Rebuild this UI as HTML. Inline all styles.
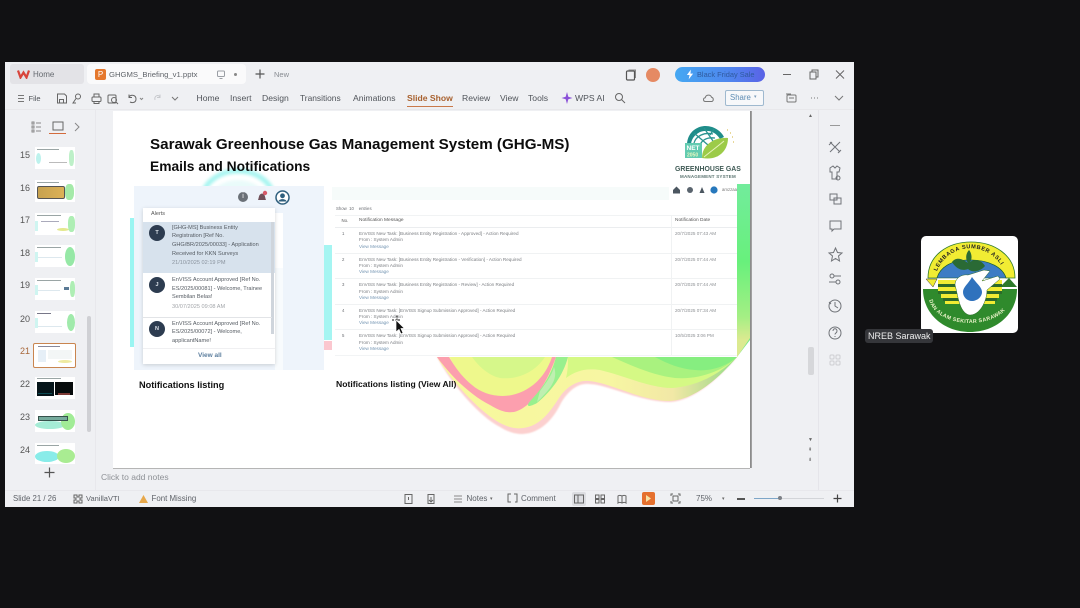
<!DOCTYPE html>
<html lang="en">
<head>
<meta charset="utf-8">
<title>GHGMS Briefing</title>
<style>
html,body{margin:0;padding:0;width:1080px;height:608px;overflow:hidden;background:#111113;font-family:"Liberation Sans",sans-serif}
#all{position:absolute;left:0;top:0;width:1080px;height:608px;background:#111113;overflow:hidden;filter:blur(.35px)}
.a{position:absolute}
.t{position:absolute;white-space:nowrap;line-height:1}
#win{position:absolute;left:5px;top:62px;width:849px;height:445px;background:#eff0f3}
.menu{font-size:8.6px;color:#50545a;top:94px}
.num{font-size:9px;color:#555;left:20px}
.thumb{position:absolute;left:35px;width:40px;height:22px;background:#fff;overflow:hidden}
.thumb i{position:absolute;display:block}
.s5{font-size:4.3px;color:#6a6d72}
.row{font-size:4.6px;color:#7b7e82;left:359px}
.lnk{font-size:4.6px;color:#7596b3;left:359px}
.dt{font-size:4.6px;color:#8c8f93;left:675px}
.al{font-size:5.6px;color:#555b62;left:172px}
.st{font-size:8px;color:#5e6268;top:495px}
</style>
</head>
<body>
<div id="all">
<div id="win"></div>

<!-- Tabs -->
<div class="a" style="left:10px;top:64px;width:74px;height:20px;background:#e3e3e7;border-radius:3px"></div>
<div class="a" style="left:87px;top:64px;width:159px;height:20px;background:#fafafb;border-radius:4px"></div>
<svg class="a" style="left:17px;top:69px" width="13" height="10" viewBox="0 0 13 10"><path d="M1 1.500 L3.500 8.500 L6.500 3.500 L9.500 8.500 L12 1.500" fill="none" stroke="#d8453c" stroke-width="2.200"/></svg>
<div class="t" style="left:33px;top:71px;font-size:8px;color:#666a70">Home</div>
<div class="a" style="left:95px;top:69px;width:11px;height:11px;background:#e5782e;border-radius:2px;color:#fff;font-size:8px;line-height:11px;text-align:center">P</div>
<div class="t" style="left:109px;top:71px;font-size:7.700px;color:#60646a">GHGMS_Briefing_v1.pptx</div>
<svg class="a" style="left:216px;top:70px" width="11" height="10" viewBox="0 0 11 10"><rect x="1.500" y="1" width="7" height="5.500" rx="1" fill="none" stroke="#9a9ea4"/><path d="M3.500 8.500h3" stroke="#9a9ea4"/></svg>
<div class="a" style="left:234px;top:73px;width:3px;height:3px;background:#888;border-radius:50%"></div>
<svg class="a" style="left:254px;top:68px" width="12" height="12" viewBox="0 0 12 12"><path d="M6 1.500v9M1.500 6h9" stroke="#555" stroke-width="1.200"/></svg>
<div class="t" style="left:274px;top:71px;font-size:7.500px;color:#888c92">New</div>

<!-- Title-bar right -->
<svg class="a" style="left:625px;top:69px" width="12" height="12" viewBox="0 0 12 12"><rect x="1.500" y="2" width="8" height="9" rx="1" fill="none" stroke="#555" stroke-width="1.200"/><path d="M3.500 1h7v8" fill="none" stroke="#888"/></svg>
<div class="a" style="left:646px;top:68px;width:14px;height:14px;border-radius:50%;background:#e58a63"></div>
<div class="a" style="left:675px;top:67px;width:90px;height:15px;border-radius:8px;background:linear-gradient(90deg,#45a8f2,#4f86ee 60%,#5a62e6)"></div>
<svg class="a" style="left:686px;top:69px" width="8" height="11" viewBox="0 0 9 12"><path d="M5.500 .5 L1 6.500 H4 L3 11.500 L8 5 H5 Z" fill="#fff"/></svg>
<div class="t" style="left:697px;top:71px;font-size:7.400px;color:#2f5a9e">Black Friday Sale</div>
<svg class="a" style="left:781px;top:68px" width="66" height="13" viewBox="0 0 66 13" fill="none" stroke="#666" stroke-width="1"><path d="M2 6.500h8"/><rect x="29" y="4" width="6" height="7"/><path d="M31 4V2h6v7h-2"/><path d="M55 2.500l8 8M63 2.500l-8 8"/></svg>

<!-- Menu bar -->
<svg class="a" style="left:17px;top:94px" width="8" height="9" viewBox="0 0 8 9"><path d="M1 1.500h6M1 4.500h6M1 7.500h6" stroke="#777"/></svg>
<div class="t menu" style="left:28.500px;font-size:7.500px;top:95px">File</div>
<svg class="a" style="left:56px;top:92px" width="130" height="13" viewBox="0 0 130 13" fill="none" stroke="#666" stroke-width="1"><path d="M1.500 2h7l2 2v7h-9z"/><path d="M3.500 11V7.500h4V11"/><circle cx="22" cy="4.500" r="2.500"/><path d="M20 6.500l-3 4.500h3"/><rect x="36" y="5" width="9" height="4.500" rx="1"/><path d="M38 5V2h5v3M38 9.500v2h5v-2"/><rect x="52" y="3" width="8" height="8" rx="1"/><circle cx="58" cy="8" r="2.500"/><path d="M60 10l2 2"/><path d="M73 5c2-3 7-2 7 2s-4 4-6 3M73 2.500V5.500h3"/><path d="M84 6l1.500 1.500L87 6" stroke="#888"/><path d="M104 5c-2-3-6-1-5 3M104 2.500V5.500h-3" stroke="#c7c9cd"/><path d="M116 5l3 3 3-3" stroke="#777"/></svg>
<div class="t menu" style="left:196.500px">Home</div>
<div class="t menu" style="left:230px">Insert</div>
<div class="t menu" style="left:262px">Design</div>
<div class="t menu" style="left:300px;font-size:8.400px">Transitions</div>
<div class="t menu" style="left:353px">Animations</div>
<div class="t menu" style="left:407px;color:#a8612f;font-weight:bold">Slide Show</div>
<div class="a" style="left:407px;top:106px;width:46px;height:1px;background:#c9794a"></div>
<div class="t menu" style="left:462px">Review</div>
<div class="t menu" style="left:500px">View</div>
<div class="t menu" style="left:528px">Tools</div>
<svg class="a" style="left:561px;top:91px" width="12" height="14" viewBox="0 0 12 14"><path d="M6 1 L7.300 5.700 L11.500 7 L7.300 8.300 L6 13 L4.700 8.300 L.5 7 L4.700 5.700Z" fill="#8a50d8"/></svg>
<div class="t menu" style="left:575px">WPS AI</div>
<svg class="a" style="left:614px;top:92px" width="12" height="12" viewBox="0 0 12 12" fill="none" stroke="#666"><circle cx="5" cy="5" r="3.500"/><path d="M7.500 7.500l3.500 3.500"/></svg>
<svg class="a" style="left:702px;top:92px" width="13" height="12" viewBox="0 0 13 12" fill="none" stroke="#777"><path d="M3.500 9.500C1 9.500.8 6 3.300 5.700 3.800 2.500 8.500 2.200 9.500 5.200 11.500 5.500 12 8.500 10 9.500z"/></svg>
<div class="a" style="left:725px;top:90px;width:37px;height:14px;border:1px solid #9fb9cf;border-radius:2px;background:#f7f8fa"></div>
<div class="t" style="left:730px;top:94px;font-size:7.800px;color:#5d8cb4">Share</div>
<div class="t" style="left:754px;top:95px;font-size:5px;color:#7a9cba">▾</div>
<svg class="a" style="left:785px;top:92px" width="60" height="12" viewBox="0 0 60 12" fill="none" stroke="#777"><rect x="2" y="3" width="9" height="7" rx="1"/><path d="M1 2h5M4 6h5"/><path d="M26 6h1M29 6h1M32 6h1"/><path d="M50 4l4 4 4-4"/></svg>

<!-- Divider lines -->
<div class="a" style="left:5px;top:109px;width:849px;height:1px;background:#e8e8eb"></div>
<div class="a" style="left:95px;top:110px;width:1px;height:380px;background:#e8e8ec"></div>
<div class="a" style="left:818px;top:110px;width:1px;height:380px;background:#e5e5ea"></div>
<div class="a" style="left:5px;top:490px;width:849px;height:1px;background:#e8e8ec"></div>

<!-- Left panel -->
<svg class="a" style="left:31px;top:120px" width="60" height="14" viewBox="0 0 60 14" fill="none" stroke="#888"><path d="M1 2h2v2H1zM1 6h2v2H1zM1 10h2v2H1z"/><path d="M5 3h5M5 7h5M5 11h5"/><rect x="22" y="2" width="10" height="8" stroke="#666"/><path d="M44 3l4 4-4 4"/></svg>
<div class="a" style="left:49px;top:133px;width:17px;height:1px;background:#d36b3c"></div>

<div class="t num" style="top:151px">15</div><div class="t num" style="top:184px">16</div><div class="t num" style="top:216px">17</div><div class="t num" style="top:249px">18</div><div class="t num" style="top:281px">19</div><div class="t num" style="top:315px">20</div><div class="t num" style="top:347px;color:#a8673a">21</div><div class="t num" style="top:380px">22</div><div class="t num" style="top:413px">23</div><div class="t num" style="top:446px">24</div>

<div class="thumb" style="top:147px"><i style="left:2px;top:2px;width:22px;height:1px;background:#9aa5a5"></i><i style="left:1px;top:6px;width:5px;height:11px;background:#bdf2ed;border-radius:50%"></i><i style="left:34px;top:3px;width:5px;height:16px;background:#bdf0c8;border-radius:40%"></i><i style="left:14px;top:15px;width:18px;height:1px;background:#bbb"></i></div>
<div class="thumb" style="top:180px"><i style="left:2px;top:2px;width:22px;height:1px;background:#9aa5a5"></i><i style="left:2px;top:6px;width:28px;height:13px;background:linear-gradient(90deg,#c7a250,#dcb156);border:1px solid #555;border-radius:2px;box-sizing:border-box"></i><i style="left:30px;top:4px;width:9px;height:16px;background:#a5eaa9;border-radius:40%"></i></div>
<div class="thumb" style="top:213px"><i style="left:2px;top:2px;width:24px;height:1px;background:#9aa5a5"></i><i style="left:6px;top:8px;width:18px;height:1px;background:#aab"></i><i style="left:22px;top:15px;width:12px;height:3px;background:#e4e88e;border-radius:50%"></i><i style="left:33px;top:3px;width:7px;height:16px;background:#aeeeb4;border-radius:40%"></i><i style="left:0;top:8px;width:3px;height:10px;background:#cff5f1"></i></div>
<div class="thumb" style="top:245px"><i style="left:2px;top:2px;width:24px;height:1px;background:#9aa5a5"></i><i style="left:30px;top:2px;width:10px;height:19px;background:#96e8a6;border-radius:50%"></i><i style="left:0;top:7px;width:3px;height:10px;background:#cff5f1"></i><i style="left:3px;top:12px;width:24px;height:1px;background:#dde8ee"></i></div>
<div class="thumb" style="top:278px"><i style="left:2px;top:2px;width:24px;height:1px;background:#9aa5a5"></i><i style="left:29px;top:9px;width:5px;height:3px;background:#5b7a95"></i><i style="left:35px;top:3px;width:5px;height:16px;background:#aeeeb4;border-radius:40%"></i><i style="left:0;top:7px;width:3px;height:10px;background:#cff5f1"></i><i style="left:3px;top:12px;width:22px;height:1px;background:#dde8ee"></i></div>
<div class="thumb" style="top:311px"><i style="left:2px;top:2px;width:14px;height:1px;background:#778"></i><i style="left:32px;top:3px;width:8px;height:17px;background:#a0eaab;border-radius:50%"></i><i style="left:0;top:7px;width:3px;height:10px;background:#cff5f1"></i><i style="left:3px;top:15px;width:24px;height:1px;background:#dde8ee"></i></div>
<div class="a" style="left:33px;top:343px;width:41px;height:23px;border:1px solid #c9854f;border-radius:2px;background:#fff;overflow:hidden"><i style="position:absolute;left:4px;top:2px;width:22px;height:1px;background:#889"></i><i style="position:absolute;left:4px;top:6px;width:8px;height:12px;background:#e6eff7"></i><i style="position:absolute;left:14px;top:6px;width:24px;height:9px;background:#f3f6f6"></i><i style="position:absolute;left:24px;top:16px;width:14px;height:3px;background:#eeeaa0;border-radius:50%"></i></div>
<div class="thumb" style="top:377px"><i style="left:2px;top:1px;width:24px;height:1px;background:#9aa5a5"></i><i style="left:2px;top:5px;width:17px;height:14px;background:#06151a"></i><i style="left:20px;top:5px;width:18px;height:13px;background:#070b0c"></i><i style="left:23px;top:16px;width:12px;height:2px;background:#7d3a35"></i><i style="left:3px;top:16px;width:14px;height:1px;background:#0c4a52"></i></div>
<div class="thumb" style="top:410px"><i style="left:0;top:11px;width:30px;height:8px;background:#a5ecd6;border-radius:50%"></i><i style="left:26px;top:3px;width:14px;height:17px;background:#a1ec96;border-radius:50%"></i><i style="left:3px;top:6px;width:30px;height:5px;background:#76ab9c;border:1px solid #37524c;box-sizing:border-box"></i></div>
<div class="thumb" style="top:443px;height:21px"><i style="left:0;top:8px;width:24px;height:11px;background:#89ece9;border-radius:50%"></i><i style="left:22px;top:6px;width:18px;height:14px;background:#a9ec92;border-radius:50%"></i><i style="left:2px;top:2px;width:22px;height:1px;background:#9aa5a5"></i></div>
<div class="a" style="left:87px;top:316px;width:4px;height:116px;background:#cfd0d4;border-radius:2px"></div>
<svg class="a" style="left:44px;top:467px" width="11" height="11" viewBox="0 0 11 11"><path d="M5.500 .5v10M.5 5.500h10" stroke="#555" stroke-width="1.200"/></svg>

<!-- Slide -->
<div class="a" style="left:113px;top:111px;width:637px;height:357px;background:#fff;box-shadow:1px 0 0 #8c8c8c,2px 0 0 #a0a0a0,0 1px 0 #b5b5b5"></div>
<svg class="a" style="left:113px;top:111px" width="637" height="357" viewBox="113 111 637 357">
<defs>
<filter id="b1" x="-20%" y="-20%" width="140%" height="140%"><feGaussianBlur stdDeviation="1.500"/></filter>
<filter id="b2" x="-10%" y="-10%" width="120%" height="120%"><feGaussianBlur stdDeviation=".8"/></filter>
<linearGradient id="wg" x1="440" y1="0" x2="750" y2="0" gradientUnits="userSpaceOnUse"><stop offset="0" stop-color="#f7f89c"/><stop offset=".55" stop-color="#f7f6a2"/><stop offset=".75" stop-color="#f2e8a6"/><stop offset=".88" stop-color="#b9dd92"/><stop offset="1" stop-color="#74ea86"/></linearGradient>
<linearGradient id="gs" x1="0" y1="184" x2="0" y2="340" gradientUnits="userSpaceOnUse"><stop offset="0" stop-color="#72ec9c"/><stop offset=".5" stop-color="#68f07c"/><stop offset=".85" stop-color="#a4ef84"/><stop offset="1" stop-color="#dcea90"/></linearGradient>
</defs>
<!-- cyan arc behind alerts -->
<ellipse cx="238" cy="200" rx="36" ry="29" fill="none" stroke="#a6f5f0" stroke-width="5" filter="url(#b1)"/>
<ellipse cx="238" cy="204" rx="30" ry="24" fill="#e9fbfa" filter="url(#b1)"/>
<rect x="130" y="218" width="4" height="129" fill="#9af5f2"/>
<rect x="324" y="245" width="8" height="95" fill="#a5f5f2"/>
<rect x="324" y="341" width="8" height="9" fill="#fbc7cf"/>
<!-- pink fringe -->
<path d="M437 357 C452 385 480 417 500 427 C510 433 516 434 523 434 C540 433 553 420 561 403 C569 390 578 383 589 384 C610 385 640 402 670 402 C690 401 713 385 737 357Z" fill="#fcd0cf" filter="url(#b2)"/>
<!-- main body -->
<path d="M437 357 C452 382 480 412 500 423 C510 428 516 429 523 428 C540 426 550 412 559 398 C567 386 578 380 589 381 C612 383 640 401 670 401 C690 400 713 385 737 357 L750 340 V336 L737 345 V357Z" fill="url(#wg)"/>
<!-- yellow-green region above pink -->
<path d="M450 357 H555 C548 376 530 392 512 396 C498 399 482 395 472 386 C462 378 455 368 450 357Z" fill="#eef88c"/>
<path d="M472 357 H545 C535 372 518 380 500 378 C490 376 480 368 472 357Z" fill="#d6f78a"/>
<!-- pink band -->
<path d="M437 357 C450 375 470 395 490 405 C500 411 506 413 514 412 C530 408 545 388 556 357 H552 C545 378 530 391 512 395 C498 398 482 394 472 385 C462 377 455 367 449 357Z" fill="#fc9fae"/>
<!-- bright green stripe -->
<path d="M556 357 H568 C564 372 555 388 537 403 C528 408 524 407 533 398 C545 385 552 372 556 357Z" fill="#98f08e"/>
<path d="M540 391 C546 383 552 375 554 367 C558 378 552 388 537 402Z" fill="#bfefb0"/>
<!-- upper right bands -->
<path d="M568 357 H737 C722 372 700 386 672 388 C650 388 625 376 600 370 C585 368 576 371 566 378 C568 370 568 363 568 357Z" fill="#d5f985"/>
<path d="M612 357 H737 C725 369 702 380 675 378 C655 376 632 366 612 357Z" fill="#a9f27f"/>
<path d="M655 357 H737 C728 365 712 372 695 370 C680 369 668 364 655 357Z" fill="#86ee80"/>
<!-- right green strip -->
<path d="M737 184 H750 V338 L737 357Z" fill="url(#gs)"/>
</svg>
<div class="t" style="left:150px;top:137px;font-size:15.200px;font-weight:bold;color:#0c0c0c">Sarawak Greenhouse Gas Management System (GHG-MS)</div>
<div class="t" style="left:150px;top:160px;font-size:13.800px;font-weight:bold;color:#0c0c0c">Emails and Notifications</div>

<!-- GHG logo -->
<svg class="a" style="left:680px;top:121px" width="60" height="46" viewBox="0 0 60 46">
<path d="M7 24 C7 10 20 2 32 6 C38 8 42 12 44 16 L40 18 C36 11 28 8 20 11 C14 14 11 19 11 24Z" fill="#1f8d8a"/>
<path d="M14 22 C16 15 24 11 33 13 M20 24 C22 19 27 16 35 17 M14 12 L28 24 M24 7 L33 20 M34 8 L30 14" stroke="#2a9490" stroke-width="1.300" fill="none"/>
<path d="M22 37 C22 24 34 16 48 17 C48 30 38 40 22 37Z" fill="#9ccb48"/>
<path d="M24 36 C30 31 37 26 44 20" stroke="#e6f3bc" stroke-width="1" fill="none"/>
<rect x="5" y="22" width="17" height="15" fill="#62cbb0"/>
<text x="6.500" y="29" font-size="6.500" font-family="Liberation Sans" fill="#fff" font-weight="bold">NET</text>
<text x="7" y="35.500" font-size="5" font-family="Liberation Sans" fill="#e9f8c0" font-weight="bold">2050</text>
<path d="M47 9h1M50 12h1M52 16h1M53 21h1" stroke="#d9c15e" stroke-width="1.300"/>
</svg>
<div class="t" style="left:675px;top:166.500px;font-size:6.900px;font-weight:bold;color:#3f5a55">GREENHOUSE GAS</div>
<div class="t" style="left:680px;top:175px;font-size:4.500px;font-weight:bold;color:#5d7672;letter-spacing:.2px">MANAGEMENT SYSTEM</div>

<!-- Alerts panel -->
<div class="a" style="left:134px;top:186px;width:190px;height:184px;background:#eef4fb"></div>
<div class="a" style="left:275px;top:213px;width:8px;height:55px;background:#fff"></div>
<div class="a" style="left:275px;top:268px;width:8px;height:102px;background:#f8fbfd"></div>
<div class="a" style="left:142.500px;top:208px;width:132px;height:156px;background:#fff;box-shadow:0 1px 4px rgba(0,0,0,.16)"></div>
<div class="a" style="left:142.500px;top:222px;width:132px;height:51px;background:#d7e2ed"></div>
<div class="a" style="left:271px;top:222px;width:3px;height:112px;background:#cfd5dc"></div>
<div class="a" style="left:142.500px;top:317px;width:129px;height:1px;background:#e2e4e7"></div>
<div class="a" style="left:142.500px;top:348px;width:132px;height:1px;background:#f0f0f2"></div>
<div class="a" style="left:238px;top:192px;width:10px;height:10px;border-radius:50%;background:#6a7077;color:#fff;font-size:7px;text-align:center;line-height:10px">i</div>
<svg class="a" style="left:256px;top:190px" width="13" height="13" viewBox="0 0 13 13"><path d="M2 10 C3 8 2.500 4 6 3.500 C9.500 4 9 8 10 10Z" fill="#70505a"/><circle cx="9" cy="3" r="2.200" fill="#d75a6a"/></svg>
<svg class="a" style="left:275px;top:190px" width="15" height="15" viewBox="0 0 15 15"><circle cx="7.500" cy="7.500" r="6.500" fill="#fff" stroke="#2f5f7d" stroke-width="1.500"/><circle cx="7.500" cy="5.800" r="2.400" fill="#2f5f7d"/><path d="M3.300 11.500c1-3.200 7.400-3.200 8.400 0" fill="#2f5f7d"/></svg>
<div class="t" style="left:151px;top:212px;font-size:5.500px;color:#555">Alerts</div>
<div class="a" style="left:149px;top:225px;width:16px;height:16px;border-radius:50%;background:#2d3c50;color:#dfe5ec;font-size:5.500px;font-weight:bold;text-align:center;line-height:16px">T</div>
<div class="a" style="left:149px;top:277px;width:16px;height:16px;border-radius:50%;background:#2d3c50;color:#dfe5ec;font-size:5.500px;font-weight:bold;text-align:center;line-height:16px">J</div>
<div class="a" style="left:149px;top:321px;width:16px;height:16px;border-radius:50%;background:#2d3c50;color:#dfe5ec;font-size:5.500px;font-weight:bold;text-align:center;line-height:16px">N</div>
<div class="t al" style="top:226px">[GHG-MS] Business Entity</div>
<div class="t al" style="top:234px">Registration [Ref No.</div>
<div class="t al" style="top:243px">GHG/BR/2025/00033] - Application</div>
<div class="t al" style="top:252px">Received for KKN Surveys</div>
<div class="t al" style="top:261px;color:#8a939e">21/10/2025 02:19 PM</div>
<div class="t al" style="top:278px">EnVISS Account Approved [Ref No.</div>
<div class="t al" style="top:287px">ES/2025/00081] - Welcome, Trainee</div>
<div class="t al" style="top:295px">Sembilan Belas!</div>
<div class="t al" style="top:305px;color:#a3a6aa">30/07/2025 09:08 AM</div>
<div class="t al" style="top:322px">EnVISS Account Approved [Ref No.</div>
<div class="t al" style="top:330px">ES/2025/00072] - Welcome,</div>
<div class="t al" style="top:339px">applicantName!</div>
<div class="t" style="left:198px;top:353px;font-size:6.500px;color:#5c7e9e;font-weight:bold">View all</div>

<!-- Listing panel -->
<div class="a" style="left:332px;top:184px;width:405px;height:173px;background:#fff"></div>
<div class="a" style="left:332px;top:187px;width:337px;height:13px;background:#f6fbfa"></div>
<svg class="a" style="left:672px;top:185px" width="48" height="10" viewBox="0 0 48 10"><path d="M1 5 L4.500 1.500 L8 5 V8.500 H1Z" fill="#4b5660"/><circle cx="18" cy="5" r="3" fill="#5a646e"/><path d="M27.500 8 L30 2 L32.500 8Z" fill="#4b5660"/><circle cx="42" cy="5" r="3.600" fill="#2778bc"/></svg>
<div class="t" style="left:722px;top:188px;font-size:4.300px;color:#777">amzzaa</div>
<div class="t s5" style="left:336px;top:207px">Show&nbsp; 10 &nbsp;&nbsp;&nbsp;entries</div>
<div class="a" style="left:335px;top:215px;width:402px;height:1px;background:#f1f3f4"></div>
<div class="a" style="left:335px;top:227px;width:402px;height:1px;background:#ebedef"></div>
<div class="a" style="left:335px;top:253px;width:402px;height:1px;background:#f0f2f3"></div>
<div class="a" style="left:335px;top:278px;width:402px;height:1px;background:#f0f2f3"></div>
<div class="a" style="left:335px;top:304px;width:402px;height:1px;background:#f0f2f3"></div>
<div class="a" style="left:335px;top:329px;width:402px;height:1px;background:#f0f2f3"></div>
<div class="a" style="left:335px;top:355px;width:402px;height:1px;background:#f2f4f5"></div>
<div class="a" style="left:671px;top:215px;width:1px;height:140px;background:#f0f2f3"></div>
<div class="t" style="left:341.500px;top:219px;font-size:4.300px;color:#555">No.</div>
<div class="t" style="left:359px;top:219px;font-size:4.800px;color:#555">Notification Message</div>
<div class="t" style="left:675px;top:219px;font-size:4.800px;color:#555">Notification Date</div>

<div class="t s5" style="left:342px;top:232px">1</div>
<div class="t row" style="top:232px">EnVISS New Task: [Business Entity Registration - Approved] - Action Required</div>
<div class="t row" style="top:238px">From : System Admin</div>
<div class="t lnk" style="top:244.500px">View Message</div>
<div class="t dt" style="top:232px">20/7/2025 07:43 AM</div>

<div class="t s5" style="left:342px;top:258px">2</div>
<div class="t row" style="top:258px">EnVISS New Task: [Business Entity Registration - Verification] - Action Required</div>
<div class="t row" style="top:264px">From : System Admin</div>
<div class="t lnk" style="top:270px">View Message</div>
<div class="t dt" style="top:258px">20/7/2025 07:44 AM</div>

<div class="t s5" style="left:342px;top:283px">3</div>
<div class="t row" style="top:283px">EnVISS New Task: [Business Entity Registration - Review] - Action Required</div>
<div class="t row" style="top:289.500px">From : System Admin</div>
<div class="t lnk" style="top:295.500px">View Message</div>
<div class="t dt" style="top:283px">20/7/2025 07:44 AM</div>

<div class="t s5" style="left:342px;top:309px">4</div>
<div class="t row" style="top:309px">EnVISS New Task: [EnVISS Signup Submission Approved] - Action Required</div>
<div class="t row" style="top:315px">From : System Admin</div>
<div class="t lnk" style="top:321px">View Message</div>
<div class="t dt" style="top:309px">20/7/2025 07:34 AM</div>

<div class="t s5" style="left:342px;top:334px">5</div>
<div class="t row" style="top:334px">EnVISS New Task: [EnVISS Signup Submission Approved] - Action Required</div>
<div class="t row" style="top:340.500px">From : System Admin</div>
<div class="t lnk" style="top:346.500px">View Message</div>
<div class="t dt" style="top:334px">10/5/2025 3:06 PM</div>

<div class="t" style="left:139px;top:381px;font-size:9.200px;font-weight:bold;color:#111">Notifications listing</div>
<div class="t" style="left:336px;top:380px;font-size:8.600px;font-weight:bold;color:#111">Notifications listing (View All)</div>

<!-- Cursor -->
<svg class="a" style="left:391px;top:315px" width="16" height="20" viewBox="0 0 16 20"><path d="M6 .5v9M1 5h9" stroke="#111" stroke-width="1" stroke-dasharray="2 1"/><path d="M5 5 L5 17 L8 14.500 L10 19 L12 18 L10 13.500 L13.500 13.500Z" fill="#111" stroke="#fff" stroke-width=".7"/></svg>

<!-- Right scrollbar area -->
<div class="a" style="left:808px;top:347px;width:6px;height:28px;background:#d6d7da;border-radius:2px"></div>
<div class="t" style="left:808px;top:114px;font-size:5px;color:#666">▲</div>
<div class="t" style="left:808px;top:438px;font-size:5px;color:#666">▼</div>
<div class="t" style="left:808px;top:448px;font-size:5px;color:#666">⇞</div>
<div class="t" style="left:808px;top:458px;font-size:5px;color:#666">⇟</div>

<!-- Right icons -->
<svg class="a" style="left:826px;top:118px" width="18" height="250" viewBox="0 0 18 250" fill="none" stroke="#707378" stroke-width="1">
<path d="M4 7.500h10" stroke="#999"/>
<path d="M4 24l10 10M14 24l-10 10M3 27l3-3M12 35l3-3"/>
<path d="M4 50l3-2 2 2 2-2 3 2-1 4h-2v7H6v-7H4z"/><circle cx="12" cy="60" r="2"/>
<rect x="4" y="76" width="7" height="6"/><rect x="8" y="80" width="7" height="6"/>
<path d="M4 103h11v8H8l-2 2v-2H4z"/>
<path d="M9.500 130l2 4.500 4.500.5-3.500 3 1 5-4-2.500-4 2.500 1-5-3.500-3 4.500-.5z"/>
<circle cx="6" cy="158" r="2"/><path d="M8 158h7M3 164h7"/><circle cx="12" cy="164" r="2"/>
<circle cx="9" cy="188" r="6"/><path d="M9 184v4l3 2M3 184l2 2"/>
<circle cx="9" cy="215" r="6"/><path d="M7 213c0-3 4-3 4 0 0 2-2 2-2 3.500M9 218v1"/>
<g stroke="#cdced2"><rect x="4" y="237" width="4" height="4" rx="1"/><rect x="10" y="237" width="4" height="4" rx="1"/><rect x="4" y="243" width="4" height="4" rx="1"/><rect x="10" y="243" width="4" height="4" rx="1"/></g>
</svg>

<!-- Notes -->
<div class="t" style="left:101px;top:473px;font-size:8.500px;color:#8e9196">Click to add notes</div>

<!-- Status bar -->
<div class="t st" style="left:13px;font-size:7.800px">Slide 21 / 26</div>
<svg class="a" style="left:73px;top:494px" width="10" height="10" viewBox="0 0 10 10" fill="none" stroke="#666"><path d="M1 1h3v2h2V1h3v3H7v2h2v3H6V7H4v2H1V6h2V4H1z"/></svg>
<div class="t st" style="left:86px;font-size:7.500px">VanillaVTI</div>
<svg class="a" style="left:138px;top:494px" width="11" height="10" viewBox="0 0 11 10"><path d="M5.500 1 L10 9 H1Z" fill="#e7a84b"/></svg>
<div class="t st" style="left:151.500px;font-size:7.900px">Font Missing</div>
<svg class="a" style="left:403px;top:493px" width="36" height="12" viewBox="0 0 36 12" fill="none" stroke="#666"><rect x="2" y="1.500" width="7" height="9"/><path d="M5.500 4v3"/><rect x="25" y="1.500" width="6" height="9"/><path d="M28 4v5M26 7l2 2 2-2"/></svg>
<svg class="a" style="left:453px;top:494px" width="10" height="10" viewBox="0 0 10 10" stroke="#888"><path d="M1 2h8M1 5h8M1 8h8"/></svg>
<div class="t st" style="left:466.500px">Notes</div>
<div class="t" style="left:490px;top:497px;font-size:5px;color:#666">▾</div>
<svg class="a" style="left:507px;top:493px" width="11" height="11" viewBox="0 0 11 11" fill="none" stroke="#666"><path d="M4 1H1v8h3M7 1h3v8H8"/></svg>
<div class="t st" style="left:521px">Comment</div>
<div class="a" style="left:572px;top:492px;width:14px;height:14px;background:#dcdde1;border-radius:2px"></div>
<svg class="a" style="left:574px;top:494px" width="56" height="10" viewBox="0 0 56 10" fill="none" stroke="#666"><rect x=".5" y="1" width="9" height="8"/><path d="M4 1v8"/><rect x="21.500" y="1" width="3.500" height="3.500"/><rect x="27" y="1" width="3.500" height="3.500"/><rect x="21.500" y="5.500" width="3.500" height="3.500"/><rect x="27" y="5.500" width="3.500" height="3.500"/><path d="M48 2c-2-1-3-1-4 0v7c1-1 2-1 4 0 2-1 3-1 4 0V2c-1-1-2-1-4 0zM48 2v7"/></svg>
<div class="a" style="left:642px;top:492px;width:13px;height:13px;background:#e5702e;border-radius:2px"></div>
<svg class="a" style="left:645px;top:495px" width="7" height="7" viewBox="0 0 7 7"><path d="M1 0 L6 3.500 L1 7Z" fill="#f7e3a5"/></svg>
<svg class="a" style="left:670px;top:493px" width="11" height="11" viewBox="0 0 11 11" fill="none" stroke="#666"><path d="M1 3V1h2M8 1h2v2M10 8v2H8M3 10H1V8"/><rect x="3" y="3" width="5" height="5"/></svg>
<div class="t st" style="left:696px">75%</div>
<div class="t" style="left:722px;top:497px;font-size:5px;color:#666">▾</div>
<div class="a" style="left:737px;top:498px;width:8px;height:1.500px;background:#555"></div>
<div class="a" style="left:754px;top:498px;width:70px;height:1px;background:#d3d5d9"></div>
<div class="a" style="left:754px;top:498px;width:25px;height:1px;background:#7ea6c8"></div>
<div class="a" style="left:778px;top:496px;width:4px;height:4px;border-radius:50%;background:#7c8086"></div>
<svg class="a" style="left:833px;top:494px" width="9" height="9" viewBox="0 0 9 9"><path d="M4.500 .5v8M.5 4.500h8" stroke="#444" stroke-width="1.200"/></svg>

<!-- Participant tile -->
<div class="a" style="left:921px;top:236px;width:97px;height:97px;background:#fff;border-radius:5px"></div>
<svg class="a" style="left:921px;top:236px" width="97" height="97" viewBox="921 236 97 97">
<defs>
<path id="arcTop" d="M936 274 A36 36 0 0 1 1005 274"/>
<path id="arcBot" d="M929 297 A41 26 0 0 0 1011 297"/>
</defs>
<path d="M928 278 C928 255 948 242 971 242 C994 242 1015 255 1015 278 H1006 C1003 268 990 260 970 260 C950 260 940 268 937 278Z" fill="#f1ec33" stroke="#2d7a2a" stroke-width=".8"/>
<path d="M937 278 C940 268 950 260 970 260 C990 260 1003 268 1006 278Z" fill="#3d7cc4" stroke="#1c5c2e" stroke-width=".6"/>
<path d="M937 279 L926 279 L933 287Z" fill="#f1ec33" stroke="#333" stroke-width=".5"/>
<path d="M1000 287 L1009 278 L1017 287Z" fill="#2d7a2a"/>
<path d="M923 289 H1017 C1017 315 995 332 970 332 C945 332 923 315 923 289Z" fill="#2f8a2c"/>
<rect x="938" y="280" width="64" height="4" fill="#f1ec33"/><rect x="938" y="284" width="64" height="3" fill="#2d6a2a"/>
<rect x="938" y="287" width="64" height="4" fill="#f1ec33"/><rect x="938" y="291" width="64" height="3" fill="#2d6a2a"/>
<rect x="941" y="294" width="58" height="4" fill="#f1ec33"/><rect x="943" y="298" width="54" height="3" fill="#2d6a2a"/>
<rect x="945" y="301" width="50" height="3" fill="#f1ec33"/>
<path d="M968 263 C960 257 955 258 952 262 C957 270 963 271 968 269 C972 273 980 272 985 266 C981 259 974 259 970 262 C973 258 971 252 969 250 C966 253 965 259 968 263Z" fill="#2a6a35"/>
<path d="M955 285 C955 278 962 274 968 275 L984 270 L990 271 L982 281 L998 276 L1000 279 L987 290 C987 302 979 316 969 315 C959 312 958 295 955 285Z" fill="#fff" stroke="#2d6a2a" stroke-width=".5"/>
<path d="M972 277 C976 283 982 287 982 292 C982 297 977 301 972 301 C967 301 963 297 963 292 C963 287 969 283 972 277Z" fill="#2f72bd"/>
<text font-size="5.600" font-weight="bold" fill="#222" font-family="Liberation Sans" letter-spacing=".6"><textPath href="#arcTop" startOffset="3">LEMBAGA SUMBER ASLI</textPath></text>
<text font-size="5.300" font-weight="bold" fill="#e9f2c8" font-family="Liberation Sans" letter-spacing=".3"><textPath href="#arcBot" startOffset="3">DAN ALAM SEKITAR SARAWAK</textPath></text>
</svg>
<div class="a" style="left:865px;top:329px;width:68px;height:14px;background:#35363a;border-radius:3px"></div>
<div class="t" style="left:868px;top:331.500px;font-size:9px;color:#eeeeee">NREB Sarawak</div>
</div>
</body>
</html>
